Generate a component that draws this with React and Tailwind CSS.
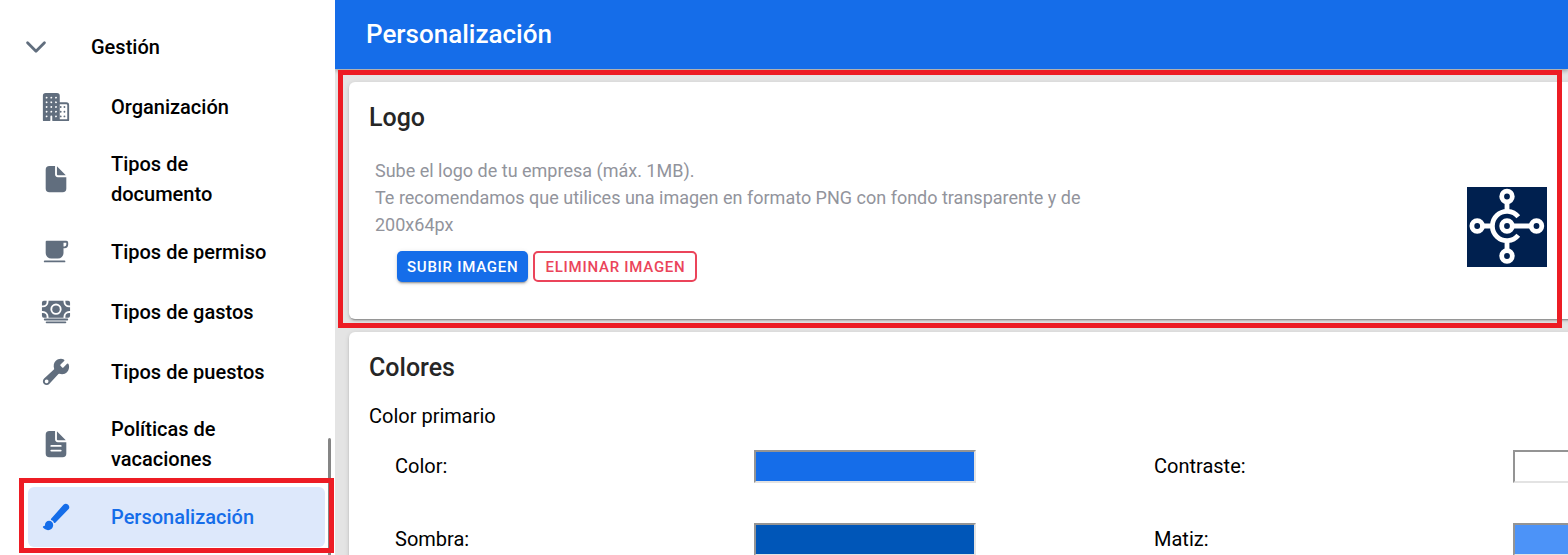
import {
    IoBrush,
    IoBuild,
    IoBusiness,
    IoCafe,
    IoCash,
    IoChevronDown,
    IoDocument,
    IoDocumentText,
} from 'react-icons/io5';

const menuItems = [
    { label: 'Organización', icon: IoBusiness },
    { label: 'Tipos de documento', icon: IoDocument },
    { label: 'Tipos de permiso', icon: IoCafe },
    { label: 'Tipos de gastos', icon: IoCash },
    { label: 'Tipos de puestos', icon: IoBuild },
    { label: 'Políticas de vacaciones', icon: IoDocumentText },
    { label: 'Personalización', icon: IoBrush, active: true },
];

const primaryColors = [
    { id: 'color', label: 'Color:', swatch: 'bg-[#156de9]' },
    { id: 'contraste', label: 'Contraste:', swatch: 'bg-white' },
    { id: 'sombra', label: 'Sombra:', swatch: 'bg-[#0056b8]' },
    { id: 'matiz', label: 'Matiz:', swatch: 'bg-[#4c93f8]' },
];

const MenuItem = ({ label, icon: Icon, active }) => (
    <li className="relative">
        <a
            href="#"
            aria-current={active ? 'page' : undefined}
            className={
                active
                    ? 'flex min-h-[60px] items-center rounded-md bg-[#dde8fb] pt-3 pb-[13px] pl-[13px] text-[#156de9]'
                    : 'flex min-h-[60px] items-center rounded-md pt-3 pb-[13px] pl-[13px] text-black'
            }
        >
            <Icon className={active ? 'size-[30px] shrink-0' : 'size-[30px] shrink-0 text-[#616e7e]'} />
            <span className="ml-10 w-[160px]">{label}</span>
        </a>
        {/* Highlight around the selected entry */}
        {active && (
            <div className="pointer-events-none absolute -top-[9px] -bottom-[6px] -left-[9px] -right-[9px] z-20 border-[5px] border-[#ed1c24]" />
        )}
    </li>
);

const Sidebar = () => (
    <aside className="relative w-[335px] shrink-0 bg-white pt-[17px] pl-7 pr-[10px] text-xl leading-[30px] font-medium">
        <button type="button" className="-ml-[7px] flex h-[60px] w-full items-center text-left">
            <IoChevronDown className="size-[30px] text-[#616e7e]" />
            <span className="ml-10">Gestión</span>
        </button>
        <ul>
            {menuItems.map((item) => (
                <MenuItem key={item.label} {...item} />
            ))}
        </ul>
        {/* Scrollbar thumb */}
        <div className="absolute top-[438px] right-1 bottom-0 w-[3px] rounded-t bg-[#858585]" />
    </aside>
);

const CompanyLogo = () => (
    <svg viewBox="0 0 80 80" className="size-20 shrink-0" role="img" aria-label="Logo de la empresa">
        <rect width="80" height="80" fill="#00204f" />
        <g fill="none" stroke="#fff" strokeWidth="4.8">
            <circle cx="40" cy="9.5" r="5.3" />
            <circle cx="40" cy="69" r="5.3" />
            <circle cx="10.2" cy="39" r="5.3" />
            <circle cx="69.5" cy="39" r="5.3" />
            <circle cx="40" cy="39" r="5.3" />
            <path d="M40 15v9M40 54v9M16 39h9M46 39h18" />
            <path d="M51.3 29.8A14.6 14.6 0 1 0 51.3 48.2" />
        </g>
    </svg>
);

const Card = ({ title, children }) => (
    <section className="-mr-3 rounded-md bg-white px-5 pt-[21px] shadow-[0_3px_1px_-2px_rgba(0,0,0,0.2),0_2px_2px_0_rgba(0,0,0,0.14),0_1px_5px_0_rgba(0,0,0,0.12)]">
        <h2 className="text-[25px] leading-[30px] font-medium text-[#262626]">{title}</h2>
        {children}
    </section>
);

const LogoCard = () => (
    <Card title="Logo">
        <div className="flex items-end justify-between pt-6 pr-[13px] pb-[37px] pl-[6px]">
            <div className="w-[710px]">
                <p className="text-lg leading-[27px] text-[#92949c]">
                    Sube el logo de tu empresa (máx. 1MB).
                    <br />
                    Te recomendamos que utilices una imagen en formato PNG con fondo transparente y de 200x64px
                </p>
                <div className="mt-[13px] ml-[22px] flex gap-[5px] text-[15px] leading-5 font-medium tracking-wider">
                    <button
                        type="button"
                        className="h-[31px] rounded-[5px] bg-[#156de9] px-[10px] text-white uppercase shadow-[0_3px_1px_-2px_rgba(0,0,0,0.2),0_2px_2px_0_rgba(0,0,0,0.14),0_1px_5px_0_rgba(0,0,0,0.12)]"
                    >
                        Subir imagen
                    </button>
                    <button
                        type="button"
                        className="h-[31px] rounded-[5px] border-2 border-[#eb445a] px-[10px] text-[#eb445a] uppercase"
                    >
                        Eliminar imagen
                    </button>
                </div>
            </div>
            <div className="pb-[15px]">
                <CompanyLogo />
            </div>
        </div>
    </Card>
);

const ColorsCard = () => (
    <Card title="Colores">
        <h3 className="mt-[18px] text-xl leading-[30px]">Color primario</h3>
        <div className="mt-[19px] ml-[26px] grid w-[calc(100%+327px)] grid-cols-[359fr_400fr_359fr_400fr] gap-y-10 pb-10 text-xl">
            {primaryColors.map(({ id, label, swatch }) => (
                <div key={id} className="contents">
                    <label htmlFor={id} className="leading-[33px]">{label}</label>
                    <input
                        id={id}
                        type="text"
                        readOnly
                        className={`${swatch} h-[33px] w-[222px] border-2 border-t-[#949494] border-r-[#e3e3e3] border-b-[#e3e3e3] border-l-[#949494]`}
                    />
                </div>
            ))}
        </div>
    </Card>
);

const App = () => (
    <div className="flex h-screen overflow-hidden bg-white font-[Roboto,sans-serif] text-black">
        <Sidebar />
        <main className="flex min-w-0 flex-1 flex-col overflow-hidden bg-[#e4e4e4]">
            <header className="z-10 flex h-[69px] shrink-0 items-center bg-[#156de9] px-[31px] pb-0.5 shadow-[0_2px_4px_rgba(0,0,0,0.3)]">
                <h1 className="text-[26px] leading-[30px] font-medium text-white">Personalización</h1>
            </header>
            <div className="relative flex flex-col gap-[13px] pt-[13px] pl-[14px]">
                <div className="flex flex-col">
                    <LogoCard />
                    {/* Highlight around the logo section */}
                    <div className="pointer-events-none absolute top-px left-[3px] right-[6px] z-20 h-[258px] border-[5px] border-[#ed1c24]" />
                </div>
                <ColorsCard />
            </div>
        </main>
    </div>
);

export default App;
